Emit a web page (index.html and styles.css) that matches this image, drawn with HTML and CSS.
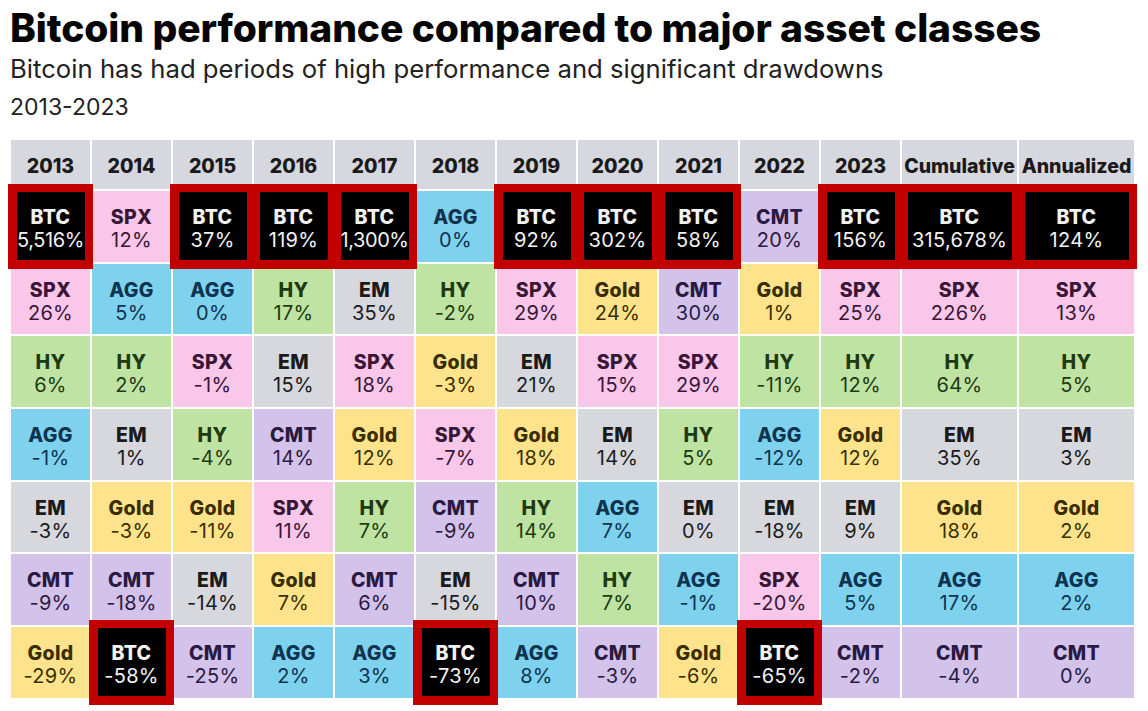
FILE: index.html
```html
<!DOCTYPE html>
<html lang="en">
<head>
<meta charset="utf-8">
<title>Bitcoin performance compared to major asset classes</title>
<link rel="stylesheet" href="styles.css">
</head>
<body>
<div class="page">
  <header class="head">
    <h1 class="title">Bitcoin performance compared to major asset classes</h1>
    <p class="sub">Bitcoin has had periods of high performance and significant drawdowns</p>
    <p class="years">2013-2023</p>
  </header>
  <div class="grid">
    <div class="h">2013</div><div class="h">2014</div><div class="h">2015</div><div class="h">2016</div><div class="h">2017</div><div class="h">2018</div><div class="h">2019</div><div class="h">2020</div><div class="h">2021</div><div class="h">2022</div><div class="h">2023</div><div class="h">Cumulative</div><div class="h">Annualized</div>

    <div class="c btc"><div class="box"><b>BTC</b><span class="tight">5,516%</span></div></div>
    <div class="c spx"><b>SPX</b><span>12%</span></div>
    <div class="c btc"><div class="box"><b>BTC</b><span>37%</span></div></div>
    <div class="c btc"><div class="box"><b>BTC</b><span>119%</span></div></div>
    <div class="c btc"><div class="box"><b>BTC</b><span class="tight">1,300%</span></div></div>
    <div class="c agg"><b>AGG</b><span>0%</span></div>
    <div class="c btc"><div class="box"><b>BTC</b><span>92%</span></div></div>
    <div class="c btc"><div class="box"><b>BTC</b><span>302%</span></div></div>
    <div class="c btc"><div class="box"><b>BTC</b><span>58%</span></div></div>
    <div class="c cmt"><b>CMT</b><span>20%</span></div>
    <div class="c btc"><div class="box"><b>BTC</b><span>156%</span></div></div>
    <div class="c btc"><div class="box"><b>BTC</b><span>315,678%</span></div></div>
    <div class="c btc"><div class="box"><b>BTC</b><span>124%</span></div></div>

    <div class="c spx"><b>SPX</b><span>26%</span></div>
    <div class="c agg"><b>AGG</b><span>5%</span></div>
    <div class="c agg"><b>AGG</b><span>0%</span></div>
    <div class="c hy"><b>HY</b><span>17%</span></div>
    <div class="c em"><b>EM</b><span>35%</span></div>
    <div class="c hy"><b>HY</b><span>-2%</span></div>
    <div class="c spx"><b>SPX</b><span>29%</span></div>
    <div class="c gold"><b>Gold</b><span>24%</span></div>
    <div class="c cmt"><b>CMT</b><span>30%</span></div>
    <div class="c gold"><b>Gold</b><span>1%</span></div>
    <div class="c spx"><b>SPX</b><span>25%</span></div>
    <div class="c spx"><b>SPX</b><span>226%</span></div>
    <div class="c spx"><b>SPX</b><span>13%</span></div>

    <div class="c hy"><b>HY</b><span>6%</span></div>
    <div class="c hy"><b>HY</b><span>2%</span></div>
    <div class="c spx"><b>SPX</b><span>-1%</span></div>
    <div class="c em"><b>EM</b><span>15%</span></div>
    <div class="c spx"><b>SPX</b><span>18%</span></div>
    <div class="c gold"><b>Gold</b><span>-3%</span></div>
    <div class="c em"><b>EM</b><span>21%</span></div>
    <div class="c spx"><b>SPX</b><span>15%</span></div>
    <div class="c spx"><b>SPX</b><span>29%</span></div>
    <div class="c hy"><b>HY</b><span>-11%</span></div>
    <div class="c hy"><b>HY</b><span>12%</span></div>
    <div class="c hy"><b>HY</b><span>64%</span></div>
    <div class="c hy"><b>HY</b><span>5%</span></div>

    <div class="c agg"><b>AGG</b><span>-1%</span></div>
    <div class="c em"><b>EM</b><span>1%</span></div>
    <div class="c hy"><b>HY</b><span>-4%</span></div>
    <div class="c cmt"><b>CMT</b><span>14%</span></div>
    <div class="c gold"><b>Gold</b><span>12%</span></div>
    <div class="c spx"><b>SPX</b><span>-7%</span></div>
    <div class="c gold"><b>Gold</b><span>18%</span></div>
    <div class="c em"><b>EM</b><span>14%</span></div>
    <div class="c hy"><b>HY</b><span>5%</span></div>
    <div class="c agg"><b>AGG</b><span>-12%</span></div>
    <div class="c gold"><b>Gold</b><span>12%</span></div>
    <div class="c em"><b>EM</b><span>35%</span></div>
    <div class="c em"><b>EM</b><span>3%</span></div>

    <div class="c em"><b>EM</b><span>-3%</span></div>
    <div class="c gold"><b>Gold</b><span>-3%</span></div>
    <div class="c gold"><b>Gold</b><span>-11%</span></div>
    <div class="c spx"><b>SPX</b><span>11%</span></div>
    <div class="c hy"><b>HY</b><span>7%</span></div>
    <div class="c cmt"><b>CMT</b><span>-9%</span></div>
    <div class="c hy"><b>HY</b><span>14%</span></div>
    <div class="c agg"><b>AGG</b><span>7%</span></div>
    <div class="c em"><b>EM</b><span>0%</span></div>
    <div class="c em"><b>EM</b><span>-18%</span></div>
    <div class="c em"><b>EM</b><span>9%</span></div>
    <div class="c gold"><b>Gold</b><span>18%</span></div>
    <div class="c gold"><b>Gold</b><span>2%</span></div>

    <div class="c cmt"><b>CMT</b><span>-9%</span></div>
    <div class="c cmt"><b>CMT</b><span>-18%</span></div>
    <div class="c em"><b>EM</b><span>-14%</span></div>
    <div class="c gold"><b>Gold</b><span>7%</span></div>
    <div class="c cmt"><b>CMT</b><span>6%</span></div>
    <div class="c em"><b>EM</b><span>-15%</span></div>
    <div class="c cmt"><b>CMT</b><span>10%</span></div>
    <div class="c hy"><b>HY</b><span>7%</span></div>
    <div class="c agg"><b>AGG</b><span>-1%</span></div>
    <div class="c spx"><b>SPX</b><span>-20%</span></div>
    <div class="c agg"><b>AGG</b><span>5%</span></div>
    <div class="c agg"><b>AGG</b><span>17%</span></div>
    <div class="c agg"><b>AGG</b><span>2%</span></div>

    <div class="c gold"><b>Gold</b><span>-29%</span></div>
    <div class="c btc"><div class="box"><b>BTC</b><span>-58%</span></div></div>
    <div class="c cmt"><b>CMT</b><span>-25%</span></div>
    <div class="c agg"><b>AGG</b><span>2%</span></div>
    <div class="c agg"><b>AGG</b><span>3%</span></div>
    <div class="c btc"><div class="box"><b>BTC</b><span>-73%</span></div></div>
    <div class="c agg"><b>AGG</b><span>8%</span></div>
    <div class="c cmt"><b>CMT</b><span>-3%</span></div>
    <div class="c gold"><b>Gold</b><span>-6%</span></div>
    <div class="c btc"><div class="box"><b>BTC</b><span>-65%</span></div></div>
    <div class="c cmt"><b>CMT</b><span>-2%</span></div>
    <div class="c cmt"><b>CMT</b><span>-4%</span></div>
    <div class="c cmt"><b>CMT</b><span>0%</span></div>
  </div>
</div>
</body>
</html>
```

FILE: styles.css
```css
html, body {
  margin: 0;
  padding: 0;
  background: #ffffff;
}

body {
  font-family: Inter, "Noto Sans", "Liberation Sans", sans-serif;
  color: #111;
  overflow: hidden;
}

.page {
  width: 1148px;
  height: 711px;
  padding: 0 0 0 10px;
  box-sizing: border-box;
}

.head {
  padding-top: 5px;
}

.title {
  margin: 0;
  font-size: 39px;
  line-height: 46px;
  font-weight: 800;
  letter-spacing: -0.1px;
  color: #050505;
}

.sub {
  margin: 3px 0 0;
  font-size: 25.7px;
  line-height: 30px;
  font-weight: 400;
  color: #222;
}

.years {
  margin: 8px 0 0;
  font-size: 23px;
  line-height: 30px;
  font-weight: 400;
  color: #222;
}

.grid {
  margin-top: 18px;
  margin-left: 1px;
  display: grid;
  grid-template-columns: repeat(11, 79px) 115px 115px;
  grid-template-rows: 49px repeat(7, 70.7px);
  gap: 2px;
  width: 1123px;
}

.h {
  background: #d7d7df;
  display: flex;
  align-items: center;
  justify-content: center;
  font-size: 19.5px;
  font-weight: 800;
  color: #1a1a1a;
  padding-top: 3px;
}

.c {
  display: flex;
  flex-direction: column;
  align-items: center;
  justify-content: center;
  padding-top: 5px;
  box-sizing: border-box;
  font-size: 20px;
  line-height: 23px;
  letter-spacing: 0.3px;
}

.c b {
  font-weight: 800;
  font-size: 19.5px;
}

.c span {
  font-weight: 400;
}

.c .tight {
  letter-spacing: -0.4px;
}

.spx { background: #f8c7ea; color: #3a1636; }
.agg { background: #7fd2ee; color: #0e3450; }
.hy { background: #bfe3a2; color: #1d3a12; }
.em { background: #d7d7de; color: #1a1a1a; }
.gold { background: #fde48c; color: #3a2e00; }
.cmt { background: #d3c2ea; color: #2a1a42; }

.btc {
  position: relative;
  z-index: 1;
  padding-top: 0;
}

.btc::before {
  content: "";
  position: absolute;
  top: -7px;
  bottom: -7px;
  left: -3px;
  right: -3px;
  background: #c20000;
  z-index: -1;
}

.box {
  width: calc(100% - 11px);
  height: 68px;
  background: #000;
  color: #f2f2f2;
  display: flex;
  flex-direction: column;
  align-items: center;
  justify-content: center;
  padding-top: 5px;
  box-sizing: border-box;
  white-space: nowrap;
}
```
